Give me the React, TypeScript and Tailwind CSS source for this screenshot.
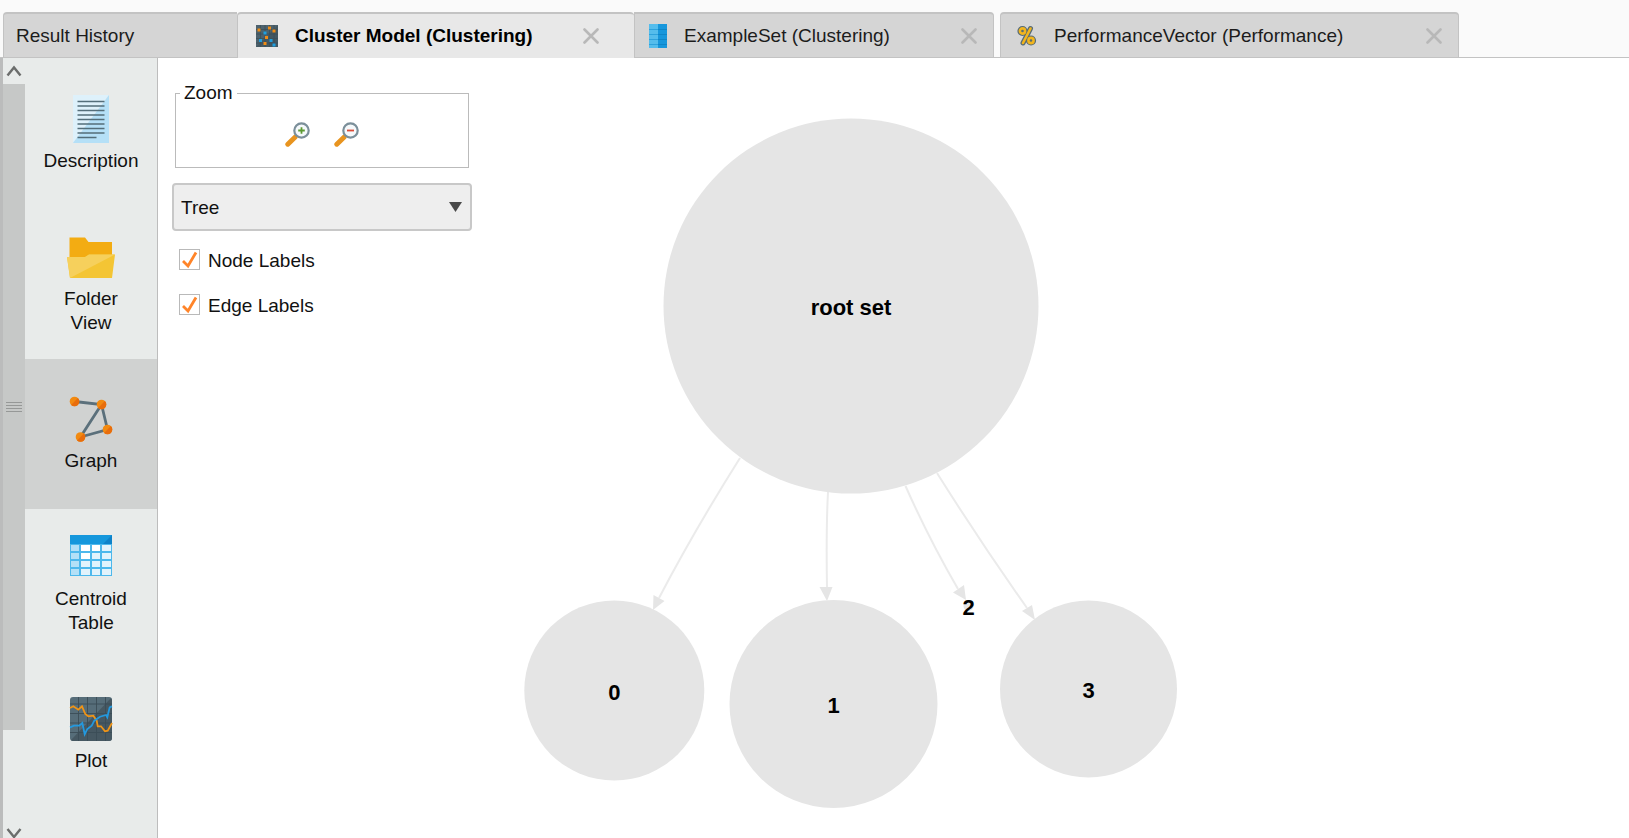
import type { ReactNode } from "react";

function ClusterIcon() {
  return (
    <svg width="22" height="24" viewBox="0 0 22 24" aria-hidden="true">
      <rect x="0" y="1" width="22" height="22" fill="#4d626d" />
      <path d="M22 1v22H0z" fill="#445862" />
      <path d="M4.500 1v22M9 1v22M13.500 1v22M18 1v22M0 5.500h22M0 10h22M0 14.500h22M0 19h22" stroke="#3c4f59" strokeWidth="0.800" />
      <g fill="#f08c14">
        <rect x="1.500" y="4.500" width="3" height="3" />
        <rect x="12" y="2.500" width="3" height="3" />
        <rect x="16.500" y="5.500" width="3" height="3" />
        <rect x="9" y="12" width="3" height="3" />
        <rect x="7.500" y="18" width="3" height="3" />
      </g>
      <g fill="#1f9fe0">
        <rect x="7.500" y="7.500" width="3" height="3" />
        <rect x="3" y="15" width="3" height="3" />
        <rect x="13.500" y="15" width="3" height="3" />
        <rect x="16.500" y="19.500" width="3" height="3" />
      </g>
    </svg>
  );
}

function ExampleSetIcon() {
  return (
    <svg width="18" height="24" viewBox="0 0 18 24" aria-hidden="true">
      <rect width="9" height="24" fill="#55bdec" />
      <rect x="9" width="9" height="24" fill="#1797dc" />
      <path d="M0 5.500h9M0 10.500h9M0 15.500h9M0 20.500h9" stroke="#2ea2dc" strokeWidth="1" />
      <path d="M9 5.500h9M9 10.500h9M9 15.500h9M9 20.500h9" stroke="#0f86c8" strokeWidth="1" />
    </svg>
  );
}

function PercentIcon() {
  return (
    <svg width="20" height="22" viewBox="0 0 20 22" fill="none" strokeLinecap="round" aria-hidden="true">
      <g stroke="#566b76" strokeWidth="5">
        <circle cx="5.500" cy="6" r="2.600" />
        <circle cx="14" cy="15.500" r="2.600" />
        <path d="M13.500 3.500 6 18" />
      </g>
      <g stroke="#f2b51d" strokeWidth="2.600">
        <circle cx="5.500" cy="6" r="2.600" />
        <circle cx="14" cy="15.500" r="2.600" />
        <path d="M13.500 3.500 6 18" />
      </g>
    </svg>
  );
}

function DescriptionIcon() {
  return (
    <svg width="48" height="48" viewBox="0 0 48 48" aria-hidden="true">
      <path d="M6 0h36L6 48z" fill="#def1fb" />
      <path d="M42 0v48H6z" fill="#b5e0f7" />
      <path d="M10.500 6.500h27M10.500 11h27M10.500 15.500h27M10.500 20h27M10.500 24.500h27M10.500 29h27M10.500 33.500h27M10.500 38h27M10.500 42.500h19" stroke="#546e7a" strokeWidth="1.500" />
    </svg>
  );
}

function FolderIcon() {
  return (
    <svg width="48" height="48" viewBox="0 0 48 48" aria-hidden="true">
      <path d="M2.500 4.500h15.500l3.500 4.500H45V26H2.500z" fill="#f3ac12" />
      <path d="M0 24h18l4-2.500H48L45 45H3z" fill="#f4c534" />
      <path d="M0 24h18l4-2.500H48L3 45z" fill="#f6d05c" />
    </svg>
  );
}

function GraphIcon() {
  return (
    <svg width="48" height="48" viewBox="0 0 48 48" aria-hidden="true">
      <path d="M7.500 6.500 34.500 9.500 40.500 34.500 13.500 42 34.500 9.500" fill="none" stroke="#5b707b" strokeWidth="2.800" />
      {[[7.500, 6.500], [34.500, 9.500], [40.500, 34.500], [13.500, 42]].map(([x, y]) => (
        <g key={x}>
          <circle cx={x} cy={y} r="4.800" fill="#f28a10" />
          <path d={`M${x + 3.400} ${y - 3.400}A4.800 4.800 0 0 1 ${x - 3.400} ${y + 3.400}z`} fill="#e86d0c" />
        </g>
      ))}
    </svg>
  );
}

function TableIcon() {
  return (
    <svg width="48" height="48" viewBox="0 0 48 48" aria-hidden="true">
      <rect x="3" y="2" width="42" height="41" fill="#4db8ec" />
      <path d="M3 2h42v9H3z" fill="#1597dc" />
      <path d="M45 2v9H36z" fill="#0d82c9" />
      {[12, 20, 28, 36].map((y) => (
        <g key={y}>
          <rect x="4" y={y} width="8" height="6" fill="#b3e0f7" />
          <rect x="14" y={y} width="9" height="6" fill={y > 27 ? "#e2f3fc" : "#ffffff"} />
          <rect x="25" y={y} width="8" height="6" fill={y > 19 ? "#e2f3fc" : "#ffffff"} />
          <rect x="35" y={y} width="9" height="6" fill="#e2f3fc" />
        </g>
      ))}
    </svg>
  );
}

function PlotIcon() {
  return (
    <svg width="48" height="48" viewBox="0 0 48 48" aria-hidden="true">
      <rect x="3" y="2" width="42" height="44" rx="3" fill="#566d79" />
      <path d="M45 5v38a3 3 0 0 1-3 3H6a3 3 0 0 1-2-1L44 3z" fill="#465862" />
      <path d="M11.500 2v44M20.500 2v44M29.500 2v44M38.500 2v44M3 9h42M3 18.500h42M3 28h42M3 37.500h42" stroke="#3b4d57" strokeWidth="0.900" />
      <path d="M3 13 6.300 11.300 11.300 14.700 15 11.300 18.300 19 21.300 21.300 26.300 20.700 29.700 25.700 30.700 31.300 34 31.300 38 36.300 40.700 35.700 45 28" fill="none" stroke="#ef9416" strokeWidth="1.800" />
      <path d="M3 32.300 7 30.700 12.300 30.700 15.300 28 17.700 39.300 20.300 34 24.700 30.700 27.300 25.700 33 21.700 39 20 40.300 22.300 42.700 12.300 45 11.300" fill="none" stroke="#2399df" strokeWidth="1.800" />
    </svg>
  );
}

function ZoomGlyph({ kind }: { kind: "in" | "out" }) {
  return (
    <svg width="25" height="25" viewBox="0 0 25 25" aria-hidden="true">
      <path d="m2.800 22.200 7.200-7" stroke="#e8941f" strokeWidth="5" strokeLinecap="round" />
      <circle cx="16.500" cy="8.500" r="7.200" fill="#f5f9fb" stroke="#7b8f9a" strokeWidth="2.200" />
      {kind === "in" ? (
        <path d="M16.500 5.200v6.600M13.200 8.500h6.600" stroke="#5c9a32" strokeWidth="1.800" />
      ) : (
        <path d="M13 8.500h7" stroke="#dc4a35" strokeWidth="1.800" />
      )}
    </svg>
  );
}

interface TabProps {
  label: string;
  icon?: ReactNode;
  active?: boolean;
  className: string;
}

function Tab({ label, icon, active = false, className }: TabProps) {
  return (
    <div
      className={`flex h-[46px] shrink-0 items-center border-t-2 border-[#c3c3c3] ${
        active ? "bg-[#e8e8e8] pb-px font-bold text-black" : "border-b bg-[#d5d5d5] text-[#1c1c1c]"
      } ${className}`}
    >
      <button role="tab" aria-selected={active} className="flex flex-1 items-center gap-[17px] whitespace-nowrap text-left">
        {icon}
        <span>{label}</span>
      </button>
      {icon && (
        <button aria-label={`Close ${label}`} className="text-[#b8b8b8]">
          <svg width="16" height="16" viewBox="0 0 16 16" aria-hidden="true">
            <path d="m1.500 1.500 13 13m0-13-13 13" stroke="currentColor" strokeWidth="2.600" strokeLinecap="round" />
          </svg>
        </button>
      )}
    </div>
  );
}

const views: { label: string; icon: ReactNode }[] = [
  { label: "Description", icon: <DescriptionIcon /> },
  { label: "Folder View", icon: <FolderIcon /> },
  { label: "Graph", icon: <GraphIcon /> },
  { label: "Centroid Table", icon: <TableIcon /> },
  { label: "Plot", icon: <PlotIcon /> },
];

function Scrollbar() {
  return (
    <div className="flex w-[22px] shrink-0 flex-col">
      <button aria-label="Scroll up" className="flex h-[26px] items-center justify-center">
        <svg width="16" height="12" viewBox="0 0 16 12" aria-hidden="true">
          <path d="m1.500 10.500 6.500-8 6.500 8" fill="none" stroke="#6b6d6c" strokeWidth="2.400" />
        </svg>
      </button>
      <div className="flex-1">
        <div className="flex h-[87%] flex-col items-center justify-center gap-[2px] bg-[#c6c8c7]">
          <div className="h-px w-4 bg-[#969897]" />
          <div className="h-px w-4 bg-[#969897]" />
          <div className="h-px w-4 bg-[#969897]" />
          <div className="h-px w-4 bg-[#969897]" />
        </div>
      </div>
      <button aria-label="Scroll down" className="flex h-3 items-end justify-center">
        <svg width="16" height="10" viewBox="0 0 16 10" aria-hidden="true">
          <path d="m1.500 1 6.500 8 6.500-8" fill="none" stroke="#6b6d6c" strokeWidth="2.400" />
        </svg>
      </button>
    </div>
  );
}

function LabelToggle({ id, label }: { id: string; label: string }) {
  return (
    <div className="flex items-end gap-2">
      <span className="grid h-6 w-[21px]">
        <input
          id={id}
          type="checkbox"
          defaultChecked
          className="peer col-start-1 row-start-1 size-[21px] appearance-none border border-[#b9b9b9] bg-white"
        />
        <svg
          viewBox="0 0 21 21"
          aria-hidden="true"
          className="pointer-events-none invisible col-start-1 row-start-1 size-[21px] peer-checked:visible"
        >
          <path d="m4 12 5 5L17 3.500" fill="none" stroke="#ff8429" strokeWidth="2.800" />
        </svg>
      </span>
      <label htmlFor={id}>{label}</label>
    </div>
  );
}

const nodes = [
  { label: "root set", x: 851, y: 306, r: 187.5 },
  { label: "0", x: 614.3, y: 690.5, r: 90 },
  { label: "1", x: 833.5, y: 704, r: 104 },
  { label: "2", x: 968.5, y: 606, r: 5 },
  { label: "3", x: 1088.5, y: 689, r: 88.5 },
];

const edges = [
  { line: "M740 458Q694 531 659 598", head: "M653 610 653.500 595 664.500 601z" },
  { line: "M828 492Q826 530 827 588", head: "M827 601 819.500 587 832.500 587z" },
  { line: "M905.500 486Q929 539 958 589", head: "M966 600 953 592.500 964 585z" },
  { line: "M937 473Q981 543 1027 608", head: "M1035 620 1022 611 1032 605z" },
];

function ClusterGraph() {
  return (
    <svg
      role="img"
      aria-label="Cluster tree"
      viewBox="488 59 1141 779"
      preserveAspectRatio="xMinYMin meet"
      className="h-full min-w-0 flex-1"
    >
      {edges.map((e) => (
        <g key={e.head}>
          <path d={e.line} fill="none" stroke="#ebebeb" strokeWidth="2" />
          <path d={e.head} fill="#e5e5e5" />
        </g>
      ))}
      {nodes.map((n) => (
        <g key={n.label}>
          <circle cx={n.x} cy={n.y} r={n.r} fill="#e5e5e5" />
          <text x={n.x} y={n.y + 9} textAnchor="middle" className="fill-black text-[22px] font-bold">
            {n.label}
          </text>
        </g>
      ))}
    </svg>
  );
}

export default function App() {
  return (
    <div className="flex h-screen flex-col overflow-hidden bg-white font-['Liberation_Sans',Arial,sans-serif] text-[19px] leading-6 text-[#111]">
      <header className="shrink-0 bg-[#fafafa] pt-3">
        <div role="tablist" className="flex bg-[linear-gradient(to_top,#c3c3c3_1px,transparent_1px)] pl-[3px]">
          <Tab label="Result History" className="w-[234px] rounded-tl border-l pl-3" />
          <Tab label="Cluster Model (Clustering)" icon={<ClusterIcon />} active className="w-[397px] rounded-t border-l pl-[18px] pr-[35px]" />
          <Tab label="ExampleSet (Clustering)" icon={<ExampleSetIcon />} className="w-[360px] rounded-tr border-x pl-[14px] pr-4" />
          <Tab label="PerformanceVector (Performance)" icon={<PercentIcon />} className="ml-[6px] w-[459px] rounded-t border-x pl-4 pr-4" />
        </div>
      </header>

      <div className="flex min-h-0 flex-1">
        <aside className="flex w-[158px] shrink-0 overflow-hidden border-l-3 border-r border-l-[#bbbcbc] border-r-[#bdbdbd] bg-[#e8ebea]">
          <Scrollbar />
          <nav className="flex min-w-0 flex-1 flex-col pt-px">
            {views.map((v) => (
              <button
                key={v.label}
                className={`flex h-[150px] shrink-0 flex-col items-center justify-center gap-1.5 px-4 ${
                  v.label === "Graph" ? "bg-[#d0d2d1]" : ""
                }`}
              >
                {v.icon}
                <span className={v.label.includes(" ") ? "w-20" : ""}>{v.label}</span>
              </button>
            ))}
          </nav>
        </aside>

        <main className="flex min-w-0 flex-1 pt-px">
          <section aria-label="Graph controls" className="flex w-[328px] shrink-0 flex-col px-[14px] pt-[22px]">
            <fieldset className="mx-[3px] h-[87px] border border-[#bbb]">
              <legend className="ml-1 px-1">Zoom</legend>
              <div className="flex justify-center gap-6 pt-[17px]">
                <button aria-label="Zoom in"><ZoomGlyph kind="in" /></button>
                <button aria-label="Zoom out"><ZoomGlyph kind="out" /></button>
              </div>
            </fieldset>
            <div className="mt-[15px] grid items-center">
              <select
                aria-label="Layout"
                className="col-start-1 row-start-1 h-12 w-full appearance-none rounded border-2 border-[#c8c8c8] bg-[#eeeeee] pt-px pl-[7px]"
              >
                <option>Tree</option>
              </select>
              <svg width="13" height="10" viewBox="0 0 13 10" aria-hidden="true" className="pointer-events-none col-start-1 row-start-1 mr-[10px] justify-self-end">
                <path d="M0 0h13L6.500 10z" fill="#4a4a4a" />
              </svg>
            </div>
            <div className="mt-[18px] flex flex-col gap-[21px] pl-[7px]">
              <LabelToggle id="node-labels" label="Node Labels" />
              <LabelToggle id="edge-labels" label="Edge Labels" />
            </div>
          </section>
          <div className="flex min-w-0 flex-1 pl-[2px]">
            <ClusterGraph />
          </div>
        </main>
      </div>
    </div>
  );
}
